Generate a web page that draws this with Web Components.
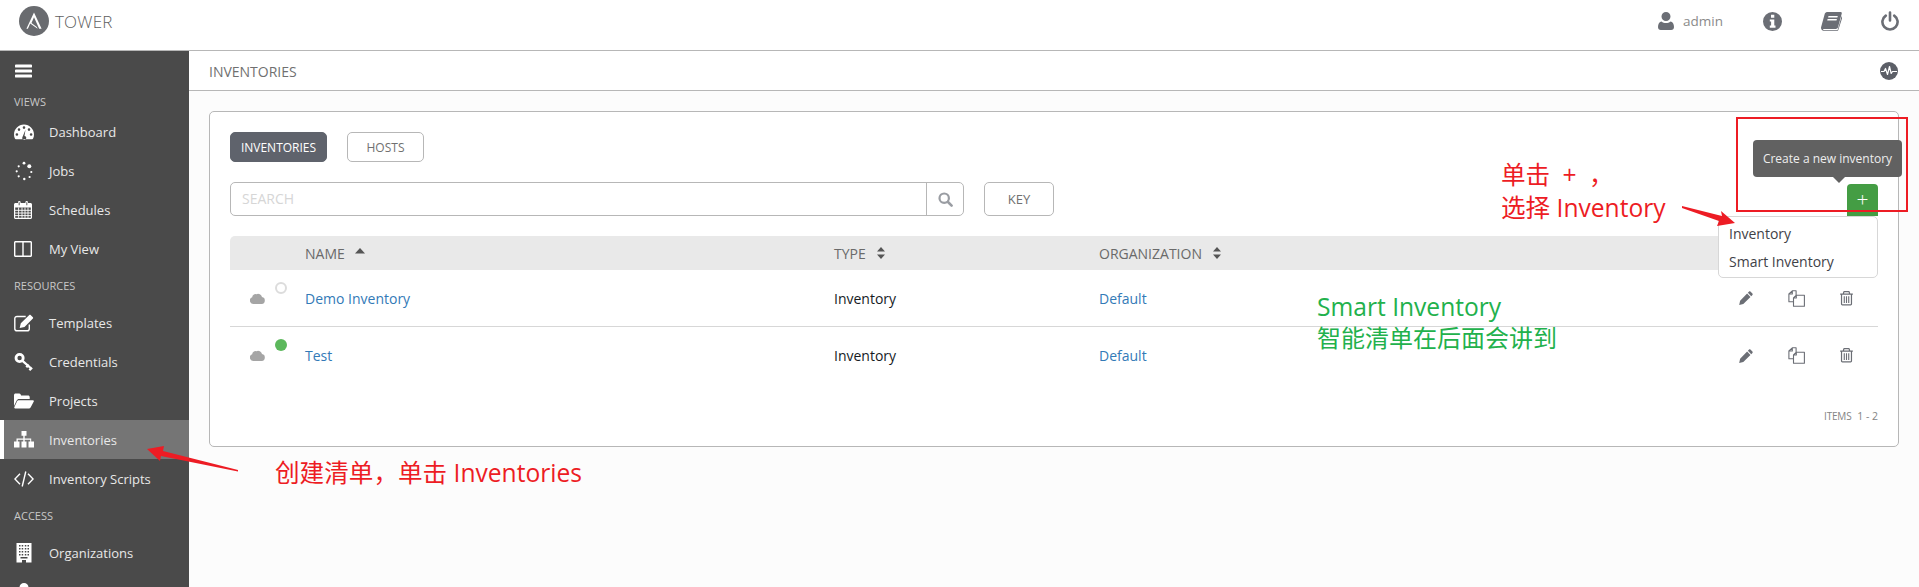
<!DOCTYPE html>
<html>
<head>
<meta charset="utf-8">
<title>Inventories</title>
<style>
    html, body {margin: 0; padding: 0; height: 587px; overflow: hidden; background: #fff;}
    body {font-family: "Open Sans", "Liberation Sans", sans-serif; position: relative;}
    tower-page {height: 587px;}
</style>
</head>
<body>
<tower-page>
    <tower-header slot="header"></tower-header>
    <tower-sidebar slot="sidebar">
        <side-label first>VIEWS</side-label>
        <side-item icon="dashboard">Dashboard</side-item>
        <side-item icon="jobs">Jobs</side-item>
        <side-item icon="calendar">Schedules</side-item>
        <side-item icon="columns">My View</side-item>
        <side-label>RESOURCES</side-label>
        <side-item icon="templates">Templates</side-item>
        <side-item icon="key">Credentials</side-item>
        <side-item icon="folder">Projects</side-item>
        <side-item icon="sitemap" active>Inventories</side-item>
        <side-item icon="code">Inventory Scripts</side-item>
        <side-label>ACCESS</side-label>
        <side-item icon="building">Organizations</side-item>
        <side-item icon="user"></side-item>
    </tower-sidebar>
    <sub-header>INVENTORIES</sub-header>
    <inventory-card>
        <inventory-row name="Demo Inventory" status="none" first></inventory-row>
        <inventory-row name="Test" status="ok"></inventory-row>
    </inventory-card>
</tower-page>
<note-layer></note-layer>

<script>
const ICONS = {
    bars: '<svg viewBox="0 0 18 14" width="17" height="14"><path fill="currentColor" d="M1 0h16a1 1 0 0 1 1 1v1.400a1 1 0 0 1-1 1H1a1 1 0 0 1-1-1V1a1 1 0 0 1 1-1zM1 5.300h16a1 1 0 0 1 1 1v1.400a1 1 0 0 1-1 1H1a1 1 0 0 1-1-1V6.300a1 1 0 0 1 1-1zM1 10.600h16a1 1 0 0 1 1 1V13a1 1 0 0 1-1 1H1a1 1 0 0 1-1-1v-1.400a1 1 0 0 1 1-1z"/></svg>',
    dashboard: '<svg viewBox="0 0 20 16" width="20" height="16"><path fill="currentColor" fill-rule="evenodd" d="M10 .5C4.500.5 0 5 0 10.500c0 1.500.3 2.900.9 4.100.2.400.5.600.9.600h16.400c.4 0 .7-.2.900-.6.600-1.200.9-2.600.9-4.100C20 5 15.500.5 10 .5zM10 2.300a1.300 1.300 0 1 1 0 2.600 1.300 1.300 0 0 1 0-2.600zM5 4.300a1.300 1.300 0 1 1 0 2.600 1.300 1.300 0 0 1 0-2.600zM15 4.300a1.300 1.300 0 1 1 0 2.600 1.300 1.300 0 0 1 0-2.600zM2.900 9.200a1.300 1.300 0 1 1 0 2.600 1.300 1.300 0 0 1 0-2.600zM17.100 9.200a1.300 1.300 0 1 1 0 2.600 1.300 1.300 0 0 1 0-2.600zM11.500 5.800l-1 6.100a2 2 0 1 1-2.100 1.300z"/></svg>',
    jobs: '<svg viewBox="0 0 20 20" width="20" height="20"><g fill="currentColor"><circle cx="4.700" cy="5.300" r="1.100"/><circle cx="10" cy="2.200" r="1.400"/><circle cx="15.300" cy="5.200" r="2"/><circle cx="17.300" cy="11" r="1.100"/><circle cx="15.600" cy="16" r="1.100"/><circle cx="10.300" cy="18" r="1.200"/><circle cx="4.700" cy="15.300" r="1.100"/><circle cx="2.700" cy="10.300" r="1.100"/></g></svg>',
    calendar: '<svg viewBox="0 0 18 18" width="18" height="18"><path fill="currentColor" fill-rule="evenodd" d="M1.500 2H4V1.300a1.300 1.300 0 0 1 2.600 0V2h4.800v-.7a1.300 1.300 0 0 1 2.600 0V2h2.500c.8 0 1.500.7 1.500 1.500v13c0 .8-.7 1.500-1.500 1.500h-15C.7 18 0 17.300 0 16.500v-13C0 2.700.7 2 1.500 2zM1.200 6.500v10.300h15.600V6.500zM4.700 1.200v3h.9v-3zM12.400 1.200v3h.9v-3z"/><path stroke="currentColor" stroke-width=".9" d="M1 9.300h16M1 12h16M1 14.600h16M4.600 6.500v10.400M8 6.500v10.400M11 6.500v10.400M14 6.500v10.400"/></svg>',
    columns: '<svg viewBox="0 0 18 16" width="18" height="16"><path fill="currentColor" fill-rule="evenodd" d="M1.500 0h15c.8 0 1.500.7 1.500 1.500v13c0 .8-.7 1.500-1.500 1.500h-15C.7 16 0 15.300 0 14.500v-13C0 .7.700 0 1.500 0zM1.400 1.500v12.800c0 .2.100.3.300.3h6.600V1.500zM9.700 1.500v13.100h6.600c.2 0 .3-.1.300-.3V1.500z"/></svg>',
    templates: '<svg viewBox="0 0 20 18" width="20" height="18"><path fill="none" stroke="currentColor" stroke-width="1.400" d="M15.300 10.500v4.200c0 1.200-.9 2.100-2.100 2.100H3c-1.200 0-2.200-.9-2.200-2.100V4.600c0-1.200 1-2.100 2.200-2.100h8.700"/><path fill="currentColor" d="M6.800 9.300 15.300 1c.4-.4 1-.4 1.300 0l2.300 2.200c.4.400.4 1 0 1.300l-8.400 8.400-4.800 1.100z"/></svg>',
    key: '<svg viewBox="0 0 20 20" width="20" height="20"><g fill="none" stroke="currentColor"><circle cx="5.600" cy="6" r="3.600" stroke-width="2.800"/><path stroke-width="2.300" d="M8.500 8.800 17.800 17M12.300 15.200l2.500-2.600M15.400 18.200l2.600-2.600"/></g></svg>',
    folder: '<svg viewBox="0 0 20 16" width="20" height="16"><path fill="currentColor" d="M0 13V2.200C0 1.300.7.600 1.600.6h3.500c.7 0 1.300.4 1.600 1l.4.800h7c.9 0 1.600.7 1.600 1.600V6H5c-1 0-1.900.6-2.300 1.500zM4.500 7.300H19c.7 0 1.100.7.800 1.300l-3.200 6c-.3.500-.8.800-1.300.8H1c-.6 0-1-.6-.7-1.200L3.200 8c.3-.5.800-.7 1.300-.7z"/></svg>',
    sitemap: '<svg viewBox="0 0 20 17" width="20" height="17"><path fill="currentColor" d="M7.500 0h5v4.800h-1.800v2.700h6.500v2.900H20v6h-5.500v-6h1.700V8.800h-5.500v1.600h1.800v6h-5v-6h1.800V8.800H3.800v1.600h1.700v6H0v-6h2.500V7.500h6.800V4.800H7.500z"/></svg>',
    code: '<svg viewBox="0 0 20 16" width="20" height="16"><path fill="none" stroke="currentColor" stroke-width="1.400" d="M6 2.800.9 8 6 13.200M14 2.800 19.100 8 14 13.200M11.800.5 8.200 15.500"/></svg>',
    building: '<svg viewBox="-2 0 20 20" width="20" height="20"><path fill="currentColor" fill-rule="evenodd" d="M.5 0h15v19.500H10v-2.500H6v2.500H.5zM3 2v1.500h1.500V2zM5.700 2v1.500h1.500V2zM8.800 2v1.500h1.500V2zM11.500 2v1.500H13V2zM3 5v1.500h1.500V5zM5.700 5v1.500h1.500V5zM8.800 5v1.500h1.500V5zM11.500 5v1.500H13V5zM3 8v1.500h1.500V8zM5.700 8v1.500h1.500V8zM8.800 8v1.500h1.500V8zM11.500 8v1.500H13V8zM3 11v1.500h1.500V11zM5.700 11v1.500h1.500V11zM8.800 11v1.500h1.500V11zM11.500 11v1.500H13V11zM4.500 14v1.500H11.500V14z"/></svg>',
    user: '<svg viewBox="-2 0 20 18" width="20" height="18"><path fill="currentColor" d="M8 0a4.500 4.500 0 1 1 0 9 4.500 4.500 0 0 1 0-9zM3.500 9.500c1.200 1 2.800 1.500 4.500 1.500s3.300-.5 4.500-1.500c2.200.4 3.500 2.600 3.500 5.500 0 1.800-1.100 3-2.800 3H2.800C1.100 18 0 16.800 0 15c0-2.900 1.300-5.100 3.500-5.500z"/></svg>',
    person: '<svg viewBox="0 0 16 18" width="16" height="18"><path fill="currentColor" d="M8 0a4.500 4.500 0 1 1 0 9 4.500 4.500 0 0 1 0-9zM3.500 9.500c1.200 1 2.800 1.500 4.500 1.500s3.300-.5 4.500-1.500c2.200.4 3.500 2.600 3.500 5.500 0 1.800-1.100 3-2.800 3H2.800C1.100 18 0 16.800 0 15c0-2.900 1.300-5.100 3.500-5.500z"/></svg>',
    cloud: '<svg viewBox="0 0 15 12" width="15" height="12"><path fill="currentColor" d="M3.500 12A3.500 3.500 0 0 1 2.200 5.200 3.300 3.300 0 0 1 6.400 2.200 4 4 0 0 1 12 5.100 3.500 3.500 0 0 1 11.800 12z"/></svg>',
    search: '<svg viewBox="0 0 15 15" width="15" height="15"><circle cx="6.200" cy="6.200" r="4.700" fill="none" stroke="currentColor" stroke-width="2.200"/><path stroke="currentColor" stroke-width="2.600" stroke-linecap="round" d="M10 10l3.600 3.600"/></svg>',
    info: '<svg viewBox="0 0 19 19" width="19" height="19"><path fill="currentColor" fill-rule="evenodd" d="M9.500 0a9.500 9.500 0 1 1 0 19 9.500 9.500 0 0 1 0-19zM8 2.800v3h3.300v-3zM6.800 7.500v2h1.300v4H6.800v2.200h5.700v-2.200h-1.200V7.500z"/></svg>',
    book: '<svg viewBox="0 0 21 19" width="21" height="19"><path fill="currentColor" fill-rule="evenodd" d="M6 0h13.500c1 0 1.500.8 1.200 1.700L17 15.300c-.3 1-1.100 1.700-2.200 1.700H2.700c-.4 0-.8.300-.6.700.1.300.5.500.9.500h12.800c.4 0 .9-.3 1-.7l3.800-13.300c.5.300.8 1 .6 1.700L17.400 17.700c-.3 1-1.200 1.300-2.200 1.300H3.200C1.800 19 .4 18 .1 16.600 0 16 0 15.300.2 14.700L3.700 2C4 1 4.900 0 6 0zM7.500 4l-.4 1.500h9.300l.4-1.500zM6.600 7l-.4 1.500h9.300l.4-1.500z"/></svg>',
    power: '<svg viewBox="0 0 18 20" width="18" height="20"><path fill="none" stroke="currentColor" stroke-width="2.600" stroke-linecap="round" d="M9 1.500v8M4.800 4.600a7.600 7.600 0 1 0 8.400 0"/></svg>',
    pulse: '<svg viewBox="0 0 18 18" width="18" height="18"><circle cx="9" cy="9" r="9" fill="currentColor"/><path fill="none" stroke="#fff" stroke-width="1.200" stroke-linejoin="round" d="M1 9.500h3l1.500-3 2 6 2-8 1.700 7 1.300-2h4.500"/></svg>',
    pencil: '<svg viewBox="0 0 15 15" width="14" height="14"><path fill="currentColor" d="M10.800.6c.4-.4 1-.4 1.400 0l2.200 2.200c.4.400.4 1 0 1.400l-1.300 1.300-3.600-3.600zM8.700 2.700l3.600 3.600-7.700 7.700-4.400 1 1-4.500z"/></svg>',
    copy: '<svg viewBox="0 0 17 17" width="17" height="17"><path fill="none" stroke="currentColor" stroke-width="1.100" stroke-linejoin="round" d="M5.200 11.800H.9V4L4.300.8h3.800v4.600M4.300.8V4H.9M8.100 5.300v.1L5.500 8v8.200h10.900V5.300zM8.300 5.500V8H5.600"/></svg>',
    trash: '<svg viewBox="0 0 14 16" width="13" height="15"><path fill="currentColor" fill-rule="evenodd" d="M4.500 0h5c.5 0 .9.300 1 .8L11 2.500h2.500c.3 0 .5.200.5.500v.5c0 .3-.2.500-.5.500H13v10c0 .9-.7 1.500-1.500 1.500h-9C1.700 15.500 1 14.900 1 14V4H.5C.2 4 0 3.800 0 3.500V3c0-.3.200-.5.500-.5H3L3.500.8c.1-.5.500-.8 1-.8zM4.700 1.200l-.3 1.300h5.200l-.3-1.300zM2.300 4v10c0 .2.100.3.300.3h8.800c.2 0 .3-.1.300-.3V4zM4 5.500h1.200v7.300H4zM6.400 5.500h1.200v7.300H6.400zM8.800 5.500H10v7.300H8.800z"/></svg>',
    logo: '<svg viewBox="0 0 30 30" width="30" height="30"><circle cx="15" cy="15" r="15" fill="#696b6f"/><path fill="#fff" d="M15 6.500 22.600 22.800h-2.400L15 11.200l-2.500 5.900 5.300 3.900.8 1.800-7.400-5.300-2.300 5.300H7.400z"/></svg>'
}

class TowerPage extends HTMLElement {
    constructor() {
        super();
        this.attachShadow({ mode: 'open' });
    }
    connectedCallback() {
        this.shadowRoot.innerHTML = `
<style>
    :host {display: grid; grid-template-columns: 189px 1fr; grid-template-rows: 51px 1fr; overflow: hidden;
        color: #707070; font-size: 14px;}
    .top {grid-column: 1 / 3;}
    .side {overflow: hidden;}
    main {background: #fcfcfc; min-width: 0;}
</style>
<div class="top"><slot name="header"></slot></div>
<div class="side"><slot name="sidebar"></slot></div>
<main><slot></slot></main>`
    }
}

class TowerHeader extends HTMLElement {
    constructor() {
        super();
        this.attachShadow({ mode: 'open' });
    }
    connectedCallback() {
        this.shadowRoot.innerHTML = `
<style>
    :host {display: flex; box-sizing: border-box; height: 51px; align-items: center; background: #fff;
        border-bottom: 1px solid #b7b7b7; padding: 0 20px 8px 19px; color: #6b6e75;}
    .logo {display: flex; margin-right: 6px;}
    .brand {font-size: 17px; color: #5f5f5f; font-weight: 300; flex: 1; letter-spacing: .2px;}
    .user {display: flex; margin-right: 9px;}
    .name {font-size: 13.500px; color: #8a8a8a; margin-right: 40px;}
    .icon {display: flex;}
    .info {margin-right: 39px;}
    .book {margin-right: 39px;}
</style>
<span class="logo">${ICONS.logo}</span>
<span class="brand">TOWER</span>
<span class="user">${ICONS.person}</span>
<span class="name">admin</span>
<span class="icon info">${ICONS.info}</span>
<span class="icon book">${ICONS.book}</span>
<span class="icon power">${ICONS.power}</span>`
    }
}

class TowerSidebar extends HTMLElement {
    constructor() {
        super();
        this.attachShadow({ mode: 'open' });
    }
    connectedCallback() {
        this.shadowRoot.innerHTML = `
<style>
    :host {display: block; height: 536px; background: #4a4a4a; color: #fff; overflow: hidden;}
    .bars {display: flex; height: 39px; align-items: center; padding-left: 15px; box-sizing: border-box;}
</style>
<div class="bars">${ICONS.bars}</div>
<slot></slot>`
    }
}

class SideLabel extends HTMLElement {
    constructor() {
        super();
        this.attachShadow({ mode: 'open' });
    }
    connectedCallback() {
        var h = this.hasAttribute('first') ? 22 : 35
        this.shadowRoot.innerHTML = `
<style>
    :host {display: flex; height: ${h}px; align-items: center; padding-left: 14px; box-sizing: border-box;
        font-size: 11px; color: #c8c8c8;}
</style>
<slot></slot>`
    }
}

class SideItem extends HTMLElement {
    constructor() {
        super();
        this.attachShadow({ mode: 'open' });
    }
    connectedCallback() {
        this.shadowRoot.innerHTML = `
<style>
    :host {display: flex; height: 39px; align-items: center; box-sizing: border-box; padding-left: 14px;
        font-size: 13px; color: #e8e8e8;}
    :host([active]) {background: #757575; border-left: 4px solid #fff; padding-left: 10px;}
    .icon {display: flex; width: 35px; color: #fff;}
</style>
<span class="icon">${ICONS[this.getAttribute('icon')]}</span>
<span><slot></slot></span>`
    }
}

class SubHeader extends HTMLElement {
    constructor() {
        super();
        this.attachShadow({ mode: 'open' });
    }
    connectedCallback() {
        this.shadowRoot.innerHTML = `
<style>
    :host {display: flex; box-sizing: border-box; height: 40px; align-items: center; justify-content: space-between;
        background: #fff; border-bottom: 1px solid #b7b7b7; padding: 1px 21px 0 20px; font-size: 14px; color: #707070;}
    .pulse {display: flex; color: #5c5f67;}
</style>
<span><slot></slot></span>
<span class="pulse">${ICONS.pulse}</span>`
    }
}

class InventoryCard extends HTMLElement {
    constructor() {
        super();
        this.attachShadow({ mode: 'open' });
    }
    connectedCallback() {
        this.shadowRoot.innerHTML = `
<style>
    :host {display: block; position: relative; box-sizing: border-box; width: 1690px; height: 336px; margin: 20px 0 0 20px;
        background: #fff; border: 1px solid #b7b7b7; border-radius: 5px; padding: 20px 20px 0 20px;}
    button {font: inherit; box-sizing: border-box; cursor: pointer;}
    .tabs {display: flex; gap: 20px; height: 30px;}
    .tab {height: 30px; font-size: 12px; border-radius: 5px; background: #fff; border: 1px solid #b7b7b7; color: #707070; padding: 0;}
    .tab.on {width: 97px; background: #5f636c; border-color: #5f636c; color: #fff;}
    .tab.off {width: 77px;}
    .tools {display: flex; gap: 20px; margin-top: 20px; height: 34px;}
    .search {display: flex; width: 734px; box-sizing: border-box; border: 1px solid #b7b7b7; border-radius: 5px; overflow: hidden;}
    .search .field {flex: 1; padding-left: 11px; font-size: 14px; color: #d6d6d6; line-height: 32px;}
    .search .go {width: 36px; border-left: 1px solid #b7b7b7; display: flex; align-items: center; justify-content: center; color: #9a9da3;}
    .key {width: 70px; height: 34px; background: #fff; border: 1px solid #b7b7b7; border-radius: 5px; font-size: 13px; color: #707070; padding: 0;}
    .head {display: grid; grid-template-columns: 75px 529px 265px 1fr; margin-top: 20px; height: 34px; align-items: center;
        background: #e9e9e9; border-radius: 5px 5px 0 0; font-size: 14px; color: #6a6a6a;}
    .head span {display: flex; align-items: center;}
    .sort {display: inline-block; margin-left: 10px;}
    .items {position: absolute; right: 20px; top: 297px; font-size: 10px; letter-spacing: -.2px; color: #848484;}
    .items b {font-weight: 400; margin-left: 3px; font-size: 10.500px; letter-spacing: 0;}
    .tip {position: absolute; left: 1543px; top: 28px; width: 149px; height: 37px; box-sizing: border-box; background: #616161;
        border-radius: 4px; color: #eee; font-size: 12px; line-height: 37px; text-align: center;}
    .tip::after {content: ''; position: absolute; left: 80px; top: 37px; border: 6px solid transparent; border-top-color: #616161; border-bottom-width: 0;}
    .add {position: absolute; left: 1637px; top: 72px; width: 31px; height: 32px; background: #449d44; border-radius: 4px 4px 0 0;
        color: #fff; font-size: 21px; font-weight: 300; line-height: 31px; text-align: center;}
    .menu {position: absolute; left: 1508px; top: 104px; width: 160px; height: 62px; box-sizing: border-box; background: #fff;
        border: 1px solid #d7d7d7; border-radius: 5px; padding: 3px 0 0 10px; font-size: 14px; line-height: 28px; color: #3f4247;}
</style>
<div class="tabs">
    <button class="tab on">INVENTORIES</button>
    <button class="tab off">HOSTS</button>
</div>
<div class="tools">
    <div class="search"><span class="field">SEARCH</span><span class="go">${ICONS.search}</span></div>
    <button class="key">KEY</button>
</div>
<div class="head">
    <span></span>
    <span>NAME<svg class="sort" viewBox="0 0 10 6" width="10" height="6" style="margin-top:-5px"><path fill="#555" d="M5 0l5 5.500H0z"/></svg></span>
    <span>TYPE<svg class="sort" viewBox="0 0 10 12" width="10" height="12"><path fill="#555" d="M5 0l4 4.500H1zM5 12 1 7.500h8z"/></svg></span>
    <span>ORGANIZATION<svg class="sort" viewBox="0 0 10 12" width="10" height="12"><path fill="#555" d="M5 0l4 4.500H1zM5 12 1 7.500h8z"/></svg></span>
</div>
<slot></slot>
<div class="items">ITEMS<b> 1 - 2</b></div>
<div class="tip">Create a new inventory</div>
<div class="add">+</div>
<div class="menu">Inventory<br>Smart Inventory</div>`
    }
}

class InventoryRow extends HTMLElement {
    constructor() {
        super();
        this.attachShadow({ mode: 'open' });
    }
    connectedCallback() {
        var ok = this.getAttribute('status') == 'ok'
        this.shadowRoot.innerHTML = `
<style>
    :host {display: grid; grid-template-columns: 75px 529px 265px 1fr 150px; height: 57px; align-items: center; box-sizing: border-box;
        font-size: 14px; color: #161b1f;}
    :host([first]) {border-bottom: 1px solid #d7d7d7;}
    a {color: #337ab7; text-decoration: none;}
    .cell {justify-self: start;}
    .state {position: relative; height: 100%;}
    .cloud {position: absolute; left: 20px; top: 22px; display: flex; color: #a5a5a5;}
    .dot {position: absolute; left: 45px; top: 12px; width: 12px; height: 12px; box-sizing: border-box; border-radius: 50%;
        ${ok ? 'background: #5cb85c;' : 'border: 2px solid #dcdcdc;'}}
    .acts {display: flex; color: #6b6e75; align-items: center; position: relative; left: -7px;}
    .acts span {display: flex; width: 51px; justify-content: center;}
</style>
<div class="state"><span class="cloud">${ICONS.cloud}</span><span class="dot"></span></div>
<div class="cell"><a href="#">${this.getAttribute('name')}</a></div>
<div class="cell">Inventory</div>
<div class="cell"><a href="#">Default</a></div>
<div class="acts"><span>${ICONS.pencil}</span><span>${ICONS.copy}</span><span>${ICONS.trash}</span></div>`
    }
}

// the red and green notes drawn on top of the screenshot
class NoteLayer extends HTMLElement {
    constructor() {
        super();
        this.attachShadow({ mode: 'open' });
    }
    connectedCallback() {
        this.shadowRoot.innerHTML = `
<style>
    :host {display: block; position: absolute; left: 0; top: 0; width: 1919px; height: 587px; pointer-events: none;
        font-family: "Open Sans", "Noto Sans CJK SC", sans-serif; font-size: 24.600px; line-height: 30px; color: #ed1c24;}
    div {position: absolute; white-space: nowrap;}
    .green {color: #22b14c;}
    .box {left: 1736px; top: 117px; width: 172px; height: 95px; box-sizing: border-box; border: 2px solid #ed1c24;}
    svg {position: absolute; left: 0; top: 0;}
</style>
<div style="left:275px;top:458px">创建清单，单击 Inventories</div>
<div style="left:1501px;top:160px;word-spacing:6px">单击 + ，</div>
<div style="left:1501px;top:193px">选择 Inventory</div>
<div class="green" style="left:1317px;top:292px">Smart Inventory</div>
<div class="green" style="left:1317px;top:323px;font-size:24px">智能清单在后面会讲到</div>
<div class="box"></div>
<svg width="1919" height="587"><g fill="#ed1c24">
    <path d="M147 449 164 446 163 451 238 470 238 471.500 161 456 160 461z"/>
    <path d="M1735 223 1721 211 1722 216 1682 206 1682 208 1719 221 1717 226z"/>
</g></svg>`
    }
}

window.customElements.define('tower-page', TowerPage);
window.customElements.define('tower-header', TowerHeader);
window.customElements.define('tower-sidebar', TowerSidebar);
window.customElements.define('side-label', SideLabel);
window.customElements.define('side-item', SideItem);
window.customElements.define('sub-header', SubHeader);
window.customElements.define('inventory-card', InventoryCard);
window.customElements.define('inventory-row', InventoryRow);
window.customElements.define('note-layer', NoteLayer);
</script>
</body>
</html>
